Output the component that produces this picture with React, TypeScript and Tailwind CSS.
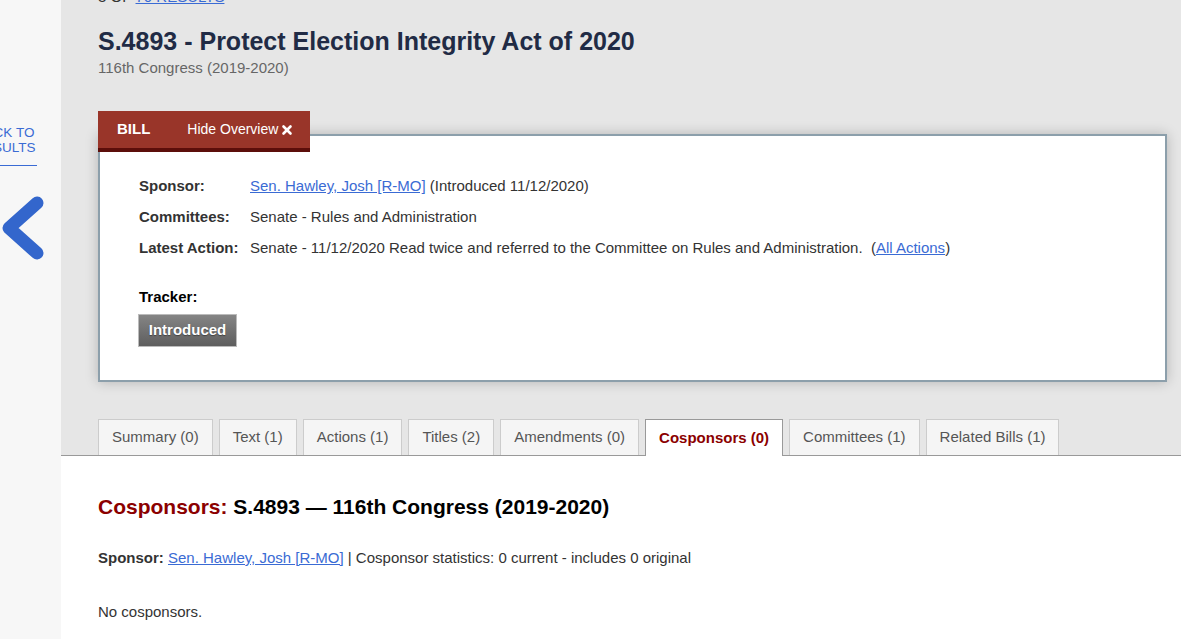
import { X } from "lucide-react";

const tabs = [
  { label: "Summary (0)" },
  { label: "Text (1)" },
  { label: "Actions (1)" },
  { label: "Titles (2)" },
  { label: "Amendments (0)" },
  { label: "Cosponsors (0)", active: true },
  { label: "Committees (1)" },
  { label: "Related Bills (1)" },
];

function Sidebar() {
  return (
    <aside className="w-[61px] shrink-0 bg-[#f7f7f7] overflow-hidden">
      <div className="pt-[125px]">
        <a
          href="#"
          className="block w-[64px] -ml-[27px] text-center text-[13.5px] leading-[15px] text-[#3a6bd4] uppercase pb-[10px] border-b border-[#3a6bd4]"
        >
          Back to results
        </a>
        <svg className="mt-[29px]" width="46" height="66" viewBox="0 0 46 66">
          <polyline
            points="37,8 9,33 37,58"
            fill="none"
            stroke="#3366cc"
            strokeWidth="13"
            strokeLinecap="round"
            strokeLinejoin="round"
          />
        </svg>
      </div>
    </aside>
  );
}

function Row({ label, children }: { label: string; children: React.ReactNode }) {
  return (
    <div className="flex h-[31px] items-center text-[15px] text-[#333]">
      <div className="w-[111px] shrink-0 font-bold">{label}</div>
      <div>{children}</div>
    </div>
  );
}

function Overview() {
  return (
    <div className="mt-[35px]">
      <div className="relative z-10 flex h-[41px] w-[212px] items-center bg-[#993529] border-b-4 border-[#5c0e0a] text-white">
        <span className="ml-[19px] text-[15px] font-bold">BILL</span>
        <span className="ml-[37px] flex items-center text-[14px]">
          Hide Overview
          <X className="ml-[2px] w-[14px] h-[14px]" strokeWidth={4.5} />
        </span>
      </div>
      <div className="-mt-[18px] bg-white border-2 border-[#8c9fab] shadow-[0_0_12px_rgba(0,0,0,0.22)] pl-[39px] pt-[35px] pb-[33px]">
        <Row label="Sponsor:">
          <a href="#" className="text-[#3a6bd4] underline">
            Sen. Hawley, Josh [R-MO]
          </a>{" "}
          (Introduced 11/12/2020)
        </Row>
        <Row label="Committees:">Senate - Rules and Administration</Row>
        <Row label="Latest Action:">
          Senate - 11/12/2020 Read twice and referred to the Committee on Rules and Administration.{" "}
          &nbsp;(
          <a href="#" className="text-[#3a6bd4] underline">
            All Actions
          </a>
          )
        </Row>
        <div className="mt-[24px] text-[15px] leading-[17px] font-bold text-black">Tracker:</div>
        <div className="mt-[9px] -ml-[1px] inline-flex h-[33px] w-[99px] items-center justify-center border border-[#bbbbbb] bg-gradient-to-b from-[#858585] to-[#5e5e5e] text-white text-[15px] font-bold [text-shadow:0_1px_1px_rgba(0,0,0,0.4)]">
          Introduced
        </div>
      </div>
    </div>
  );
}

function Tabs() {
  return (
    <div className="mt-[37px] flex gap-[6px] h-[36px]">
      {tabs.map((t) =>
        t.active ? (
          <div
            key={t.label}
            className="relative -mb-px flex items-center px-[13px] bg-white border border-b-0 border-[#999] text-[15px] font-bold text-[#8b0000]"
          >
            {t.label}
          </div>
        ) : (
          <div
            key={t.label}
            className="flex items-center px-[13px] bg-[#f5f5f5] border border-b-0 border-[#cccccc] text-[15px] text-[#555]"
          >
            {t.label}
          </div>
        )
      )}
    </div>
  );
}

export default function App() {
  return (
    <div className="flex min-h-screen font-['Liberation_Sans',Arial,sans-serif]">
      <Sidebar />
      <main className="flex-1 flex flex-col bg-white">
        <div className="bg-[#e6e6e6] pl-[37px] pr-[14px] border-b border-[#999]">
          <div className="-mt-[11px] h-[16px] text-[15px] leading-[16px] uppercase text-[#333]">
            3 of{" "}
            <a href="#" className="text-[#3a6bd4] underline">
              70 results
            </a>
          </div>
          <h1 className="mt-[22px] text-[25px] leading-[28px] font-bold text-[#212b45]">
            S.4893 - Protect Election Integrity Act of 2020
          </h1>
          <div className="mt-[4px] text-[15px] leading-[17px] text-[#666]">116th Congress (2019-2020)</div>
          <Overview />
          <Tabs />
        </div>
        <div className="pl-[37px] pt-[38px]">
          <h2 className="text-[21px] leading-[25px] font-bold text-black">
            <span className="text-[#8b0000]">Cosponsors:</span> S.4893 — 116th Congress (2019-2020)
          </h2>
          <p className="mt-[30px] text-[15px] leading-[17px] text-[#333]">
            <span className="font-bold">Sponsor:</span>{" "}
            <a href="#" className="text-[#3a6bd4] underline">
              Sen. Hawley, Josh [R-MO]
            </a>{" "}
            | Cosponsor statistics: 0 current - includes 0 original
          </p>
          <p className="mt-[37px] text-[15px] leading-[17px] text-[#333]">No cosponsors.</p>
        </div>
      </main>
    </div>
  );
}
